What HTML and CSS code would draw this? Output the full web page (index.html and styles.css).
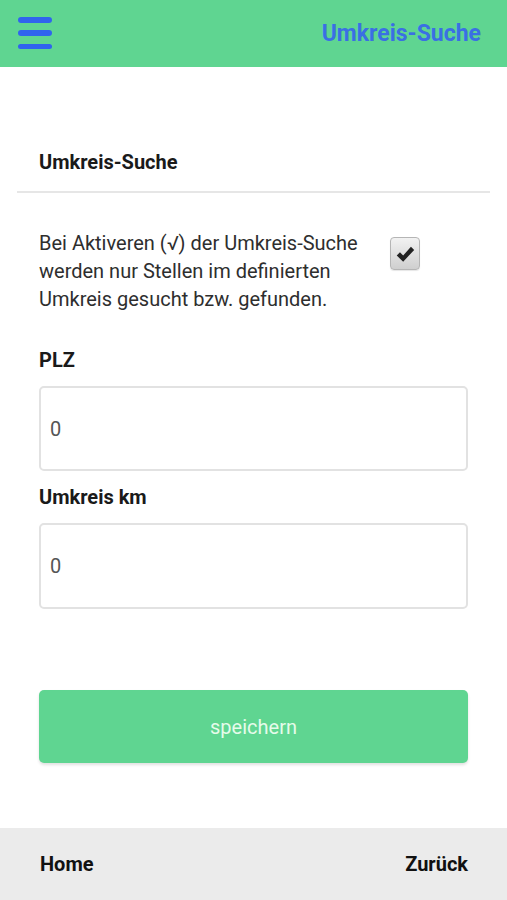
FILE: index.html
```html
<!DOCTYPE html>
<html lang="de">
<head>
  <meta charset="UTF-8" />
  <meta name="viewport" content="width=device-width, initial-scale=1.0" />
  <title>Umkreis-Suche</title>
  <link rel="stylesheet" href="styles.css">
</head>
<body>
  <header class="topbar">
    <button class="menu-btn" aria-label="Menü">
      <span></span><span></span><span></span>
    </button>
    <h1 class="topbar-title">Umkreis-Suche</h1>
  </header>

  <main class="page">
    <div class="section-head">
      <h2>Umkreis-Suche</h2>
    </div>

    <div class="form">
      <div class="toggle-row">
        <p class="hint">Bei Aktiveren (√) der Umkreis-Suche werden nur Stellen im definierten Umkreis gesucht bzw. gefunden.</p>
        <span class="checkbox">
          <svg viewBox="0 0 24 24" width="22" height="22">
            <path d="M3 13.5 L6.5 10 L10 13.5 L18.5 4 L22 7.5 L10 20.5 Z" fill="#222"/>
          </svg>
        </span>
      </div>

      <label class="field-label" for="plz">PLZ</label>
      <input class="field" id="plz" type="text" value="0">

      <label class="field-label" for="radius">Umkreis km</label>
      <input class="field field-tall" id="radius" type="text" value="0">

      <button class="btn-save">speichern</button>
    </div>
  </main>

  <footer class="bottombar">
    <a href="#">Home</a>
    <a href="#">Zurück</a>
  </footer>
</body>
</html>
```

FILE: styles.css
```css
:root {
  --green: #5fd591;
  --blue: #3064ee;
  --title-blue: #3a6fe4;
  --text-dark: #1a1a1a;
  --text: #2e2e2e;
  --line: #e6e6e6;
}

body {
  font-family: Roboto, 'Noto Sans', sans-serif;
  margin: 0;
  padding: 0;
  background: #fff;
  color: var(--text);
  height: 900px;
  display: flex;
  flex-direction: column;
}

.topbar {
  height: 67px;
  background-color: var(--green);
  display: flex;
  align-items: center;
  justify-content: space-between;
  padding: 0 26px 0 18px;
  flex-shrink: 0;
}

.menu-btn {
  background: none;
  border: none;
  padding: 0;
  width: 34px;
  height: 32px;
  display: flex;
  flex-direction: column;
  justify-content: space-between;
  margin-top: -1px;
}

.menu-btn span {
  display: block;
  height: 5.5px;
  border-radius: 3px;
  background-color: var(--blue);
}

.topbar-title {
  margin: 0;
  font-size: 23px;
  font-weight: bold;
  color: var(--title-blue);
}

.page {
  flex: 1;
  padding: 0 17px;
}

.section-head {
  margin-top: 83px;
  padding: 0 22px 17px;
  border-bottom: 2px solid var(--line);
}

.section-head h2 {
  margin: 0;
  font-size: 20px;
  line-height: 24px;
  font-weight: bold;
  color: var(--text-dark);
}

.form {
  padding: 0 22px;
}

.toggle-row {
  display: flex;
  align-items: flex-start;
  gap: 20px;
  margin-top: 36px;
}

.hint {
  margin: 0;
  font-size: 20px;
  line-height: 28px;
  width: 331px;
}

.checkbox {
  margin-top: 8px;
  width: 28px;
  height: 31px;
  border: 1px solid #b5b5b5;
  border-radius: 4px;
  background: linear-gradient(#f2f2f2, #cfcfcf);
  display: flex;
  align-items: center;
  justify-content: center;
  box-shadow: 0 1px 1px rgba(0,0,0,0.1);
}

.field-label {
  display: block;
  margin-top: 35px;
  font-size: 20px;
  line-height: 24px;
  font-weight: bold;
  color: var(--text-dark);
}

.field-label + .field {
  margin-top: 14px;
}

.field {
  display: block;
  box-sizing: border-box;
  width: 100%;
  height: 85px;
  border: 2px solid #e2e2e2;
  border-radius: 5px;
  padding: 0 9px;
  font-family: inherit;
  font-size: 20px;
  color: #555;
  background: #fff;
}

.field + .field-label {
  margin-top: 14px;
}

.field-tall {
  height: 86px;
}

.btn-save {
  display: block;
  width: 100%;
  height: 73px;
  margin-top: 81px;
  border: none;
  border-radius: 5px;
  background-color: var(--green);
  color: #e6fbea;
  font-family: inherit;
  font-size: 20px;
  box-shadow: 0 2px 3px rgba(0,0,0,0.12);
}

.bottombar {
  height: 72px;
  background-color: #ebebeb;
  display: flex;
  align-items: center;
  justify-content: space-between;
  padding: 0 39px 0 40px;
  flex-shrink: 0;
}

.bottombar a {
  color: #111;
  text-decoration: none;
  font-size: 20px;
  font-weight: bold;
}
```
